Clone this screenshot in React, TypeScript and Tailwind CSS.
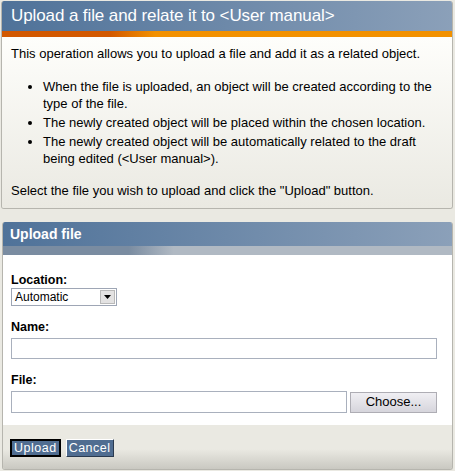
import React from "react";

const bullets = [
  "When the file is uploaded, an object will be created according to the type of the file.",
  "The newly created object will be placed within the chosen location.",
  "The newly created object will be automatically related to the draft being edited (<User manual>).",
];

const App = () => {
  return (
    <div className="w-[455px] h-[471px] bg-[#eae9e2] pt-[1px] font-['Liberation_Sans',Arial,sans-serif] text-black overflow-hidden">
      {/* intro box */}
      <div className="mx-[1px] w-[452px] rounded-[3px] border border-[#b6b5ae] border-t-0 overflow-hidden">
        <div className="h-[30px] bg-[linear-gradient(to_right,#4f7299,#8ba0b9)] pl-[9px] text-white text-[17px] tracking-[-0.1px] leading-[30px]">
          Upload a file and relate it to &lt;User manual&gt;
        </div>
        <div className="h-[6px] bg-[linear-gradient(to_right,#d25800_24%,#f29100_34%)]" />
        <div className="bg-[linear-gradient(to_bottom,#fefefb,#eae9e2)] px-[9px] pt-[8px] pb-[9px] text-[13px] leading-[17px]">
          <p>This operation allows you to upload a file and add it as a related object.</p>
          <ul className="mt-[16px] mb-[15px] pl-[32px] pr-[4px] list-disc flex flex-col gap-[2px]">
            {bullets.map((b, i) => (
              <li key={i}>{b}</li>
            ))}
          </ul>
          <p>Select the file you wish to upload and click the "Upload" button.</p>
        </div>
      </div>

      {/* upload box */}
      <div className="mt-[13px] mx-[2px] w-[451px] rounded-[3px] border border-[#b6b5ae] border-t-0 overflow-hidden">
        <div className="h-[24px] bg-[linear-gradient(to_right,#4f7299,#8ba0b9)] pl-[7px] text-white text-[14px] font-bold leading-[24px]">
          Upload file
        </div>
        <div className="h-[9px] bg-[linear-gradient(to_right,#7a8ca1_28%,#b0b9c3_38%)]" />
        <div className="bg-white px-[8px] pt-[18px] pb-[12px] text-[12.5px]">
          <div className="font-bold leading-[15px]">Location:</div>
          <div className="mt-[0px] w-[106px] h-[18px] border border-[#9ea6b5] flex items-center justify-between pl-[3px] pr-[1px]">
            <span className="text-[12px]">Automatic</span>
            <span className="w-[15px] h-[14px] bg-[#e3e2e2] border border-[#b9b9b9] flex items-center justify-center">
              <svg width="7" height="4" viewBox="0 0 7 4"><path d="M0 0h7L3.5 4z" fill="#000" /></svg>
            </span>
          </div>
          <div className="mt-[14px] font-bold leading-[15px]">Name:</div>
          <div className="mt-[3px] w-[426px] h-[21px] border border-[#a9b0bd] bg-white" />
          <div className="mt-[14px] font-bold leading-[15px]">File:</div>
          <div className="mt-[3px] flex items-center gap-[3px]">
            <div className="w-[336px] h-[22px] border border-[#a9b0bd] bg-white" />
            <div className="w-[87px] h-[21px] border border-[#aeadb4] bg-[linear-gradient(to_bottom,#f0eff3,#d6d5dc)] text-[13px] flex items-center justify-center">
              Choose...
            </div>
          </div>
        </div>
        <div className="h-[44px] bg-[linear-gradient(to_bottom,#eae9e2_55%,#c9c8c1)] px-[7px] pt-[14px] flex gap-[5px] items-start">
          <button className="h-[18px] px-[2px] bg-[#506d91] text-white text-[12.5px] leading-[14px] border-2 border-black tracking-[0.5px]">
            Upload
          </button>
          <button className="h-[18px] px-[2px] bg-[#506d91] text-white text-[12.5px] leading-[14px] border border-t-white border-l-white border-r-[#2a3a4f] border-b-[#2a3a4f] tracking-[0.5px]">
            Cancel
          </button>
        </div>
      </div>
    </div>
  );
};

export default App;
